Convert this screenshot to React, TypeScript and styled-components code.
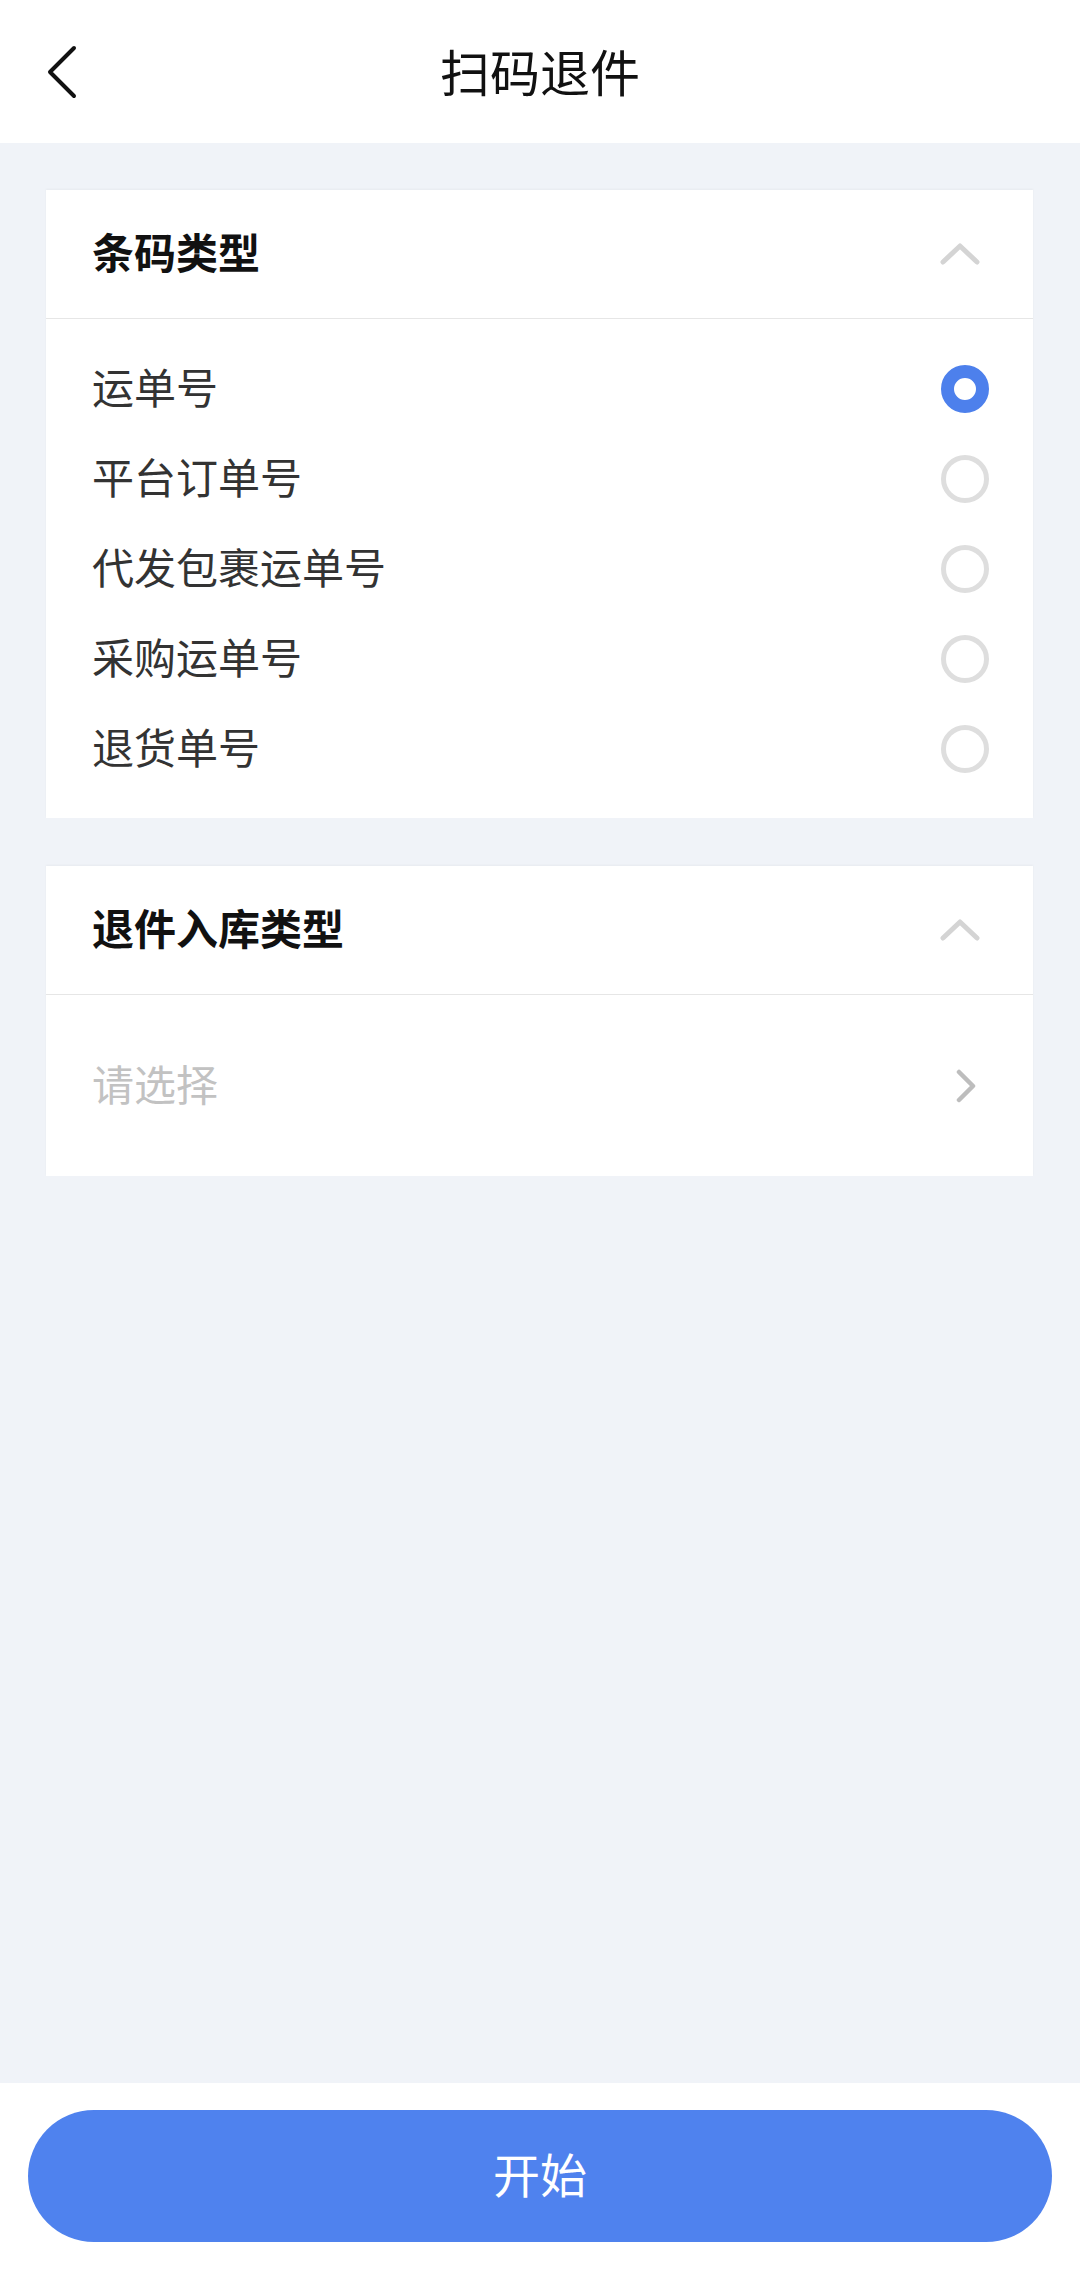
import React, { useState } from "react";
import styled, { createGlobalStyle } from "styled-components";

const GlobalStyle = createGlobalStyle`
  html, body { margin: 0; padding: 0; }
  body {
    font-family: "Noto Sans CJK SC", "Noto Sans", sans-serif;
    background: #f0f3f8;
  }
  * { box-sizing: border-box; }
`;

const Page = styled.div`
  display: flex;
  flex-direction: column;
  min-height: 2272px;
  background: #f0f3f8;
`;

const NavBar = styled.header`
  height: 143px;
  background: #ffffff;
  display: grid;
  grid-template-columns: 120px 1fr 120px;
  align-items: center;
`;

const BackButton = styled.button`
  border: none;
  background: none;
  padding: 0 0 0 44px;
  height: 100%;
  display: flex;
  align-items: center;
  cursor: pointer;
`;

const NavTitle = styled.h1`
  margin: 0;
  text-align: center;
  font-size: 50px;
  font-weight: 400;
  color: #111;
  line-height: 1;
  padding-bottom: 4px;
`;

const Content = styled.main`
  flex: 1;
  display: flex;
  flex-direction: column;
  gap: 48px;
  padding: 47px 47px 0 46px;
`;

const Card = styled.section`
  background: #ffffff;
  box-shadow: 0 -1px 2px rgba(0, 0, 0, 0.04);
`;

const CardHeader = styled.div<{ $h: number }>`
  height: ${(p) => p.$h}px;
  display: flex;
  align-items: center;
  justify-content: space-between;
  padding: 0 53px 0 46px;
  border-bottom: 1px solid #e6e6e6;
`;

const CardTitle = styled.h2`
  margin: 0;
  font-size: 42px;
  font-weight: 700;
  color: #111;
  line-height: 1;
  padding-bottom: 6px;
`;

const OptionList = styled.ul`
  list-style: none;
  margin: 0;
  padding: 25px 0 24px;
`;

const OptionRow = styled.li`
  height: 90px;
  display: flex;
  align-items: center;
  justify-content: space-between;
  padding: 0 44px 0 46px;
  cursor: pointer;
`;

const OptionLabel = styled.span`
  font-size: 42px;
  color: #333;
  line-height: 1;
  padding-bottom: 6px;
`;

const Radio = styled.span<{ $on: boolean }>`
  width: 48px;
  height: 48px;
  border-radius: 50%;
  border: ${(p) => (p.$on ? "13px solid #4d80ec" : "5px solid #dedede")};
  background: #fff;
`;

const SelectRow = styled.div`
  height: 181px;
  display: flex;
  align-items: center;
  justify-content: space-between;
  padding: 0 56px 0 46px;
`;

const Placeholder = styled.span`
  font-size: 42px;
  color: #c2c2c2;
  line-height: 1;
  padding-bottom: 6px;
`;

const BottomBar = styled.footer`
  height: 189px;
  background: #ffffff;
  padding: 27px 28px 30px;
`;

const PrimaryButton = styled.button`
  width: 100%;
  height: 132px;
  border: none;
  border-radius: 66px;
  background: #4f82ee;
  color: #fff;
  font-family: "Noto Sans CJK SC", sans-serif;
  font-size: 47px;
  font-weight: 400;
  line-height: 1;
  padding: 0 0 8px;
  cursor: pointer;
`;

const ChevronUp = () => (
  <svg width="40" height="24" viewBox="0 0 40 24">
    <path d="M3 20 L20 4 L37 20" fill="none" stroke="#d4d4d4" strokeWidth="5" strokeLinecap="round" strokeLinejoin="round" />
  </svg>
);

const ChevronRight = () => (
  <svg width="22" height="34" viewBox="0 0 22 34">
    <path d="M4 3 L18 17 L4 31" fill="none" stroke="#bdbdbd" strokeWidth="4.5" strokeLinecap="round" strokeLinejoin="round" />
  </svg>
);

const BackIcon = () => (
  <svg width="34" height="54" viewBox="0 0 34 54">
    <path d="M30 3 L6 27 L30 51" fill="none" stroke="#111" strokeWidth="4" strokeLinecap="round" strokeLinejoin="round" />
  </svg>
);

const options = ["运单号", "平台订单号", "代发包裹运单号", "采购运单号", "退货单号"];

export default function App() {
  const [selected, setSelected] = useState(0);
  return (
    <>
      <GlobalStyle />
      <Page>
        <NavBar>
          <BackButton aria-label="返回">
            <BackIcon />
          </BackButton>
          <NavTitle>扫码退件</NavTitle>
          <span />
        </NavBar>
        <Content>
          <Card>
            <CardHeader $h={129}>
              <CardTitle>条码类型</CardTitle>
              <ChevronUp />
            </CardHeader>
            <OptionList>
              {options.map((o, i) => (
                <OptionRow key={o} onClick={() => setSelected(i)}>
                  <OptionLabel>{o}</OptionLabel>
                  <Radio $on={i === selected} />
                </OptionRow>
              ))}
            </OptionList>
          </Card>
          <Card>
            <CardHeader $h={129}>
              <CardTitle>退件入库类型</CardTitle>
              <ChevronUp />
            </CardHeader>
            <SelectRow>
              <Placeholder>请选择</Placeholder>
              <ChevronRight />
            </SelectRow>
          </Card>
        </Content>
        <BottomBar>
          <PrimaryButton>开始</PrimaryButton>
        </BottomBar>
      </Page>
    </>
  );
}
